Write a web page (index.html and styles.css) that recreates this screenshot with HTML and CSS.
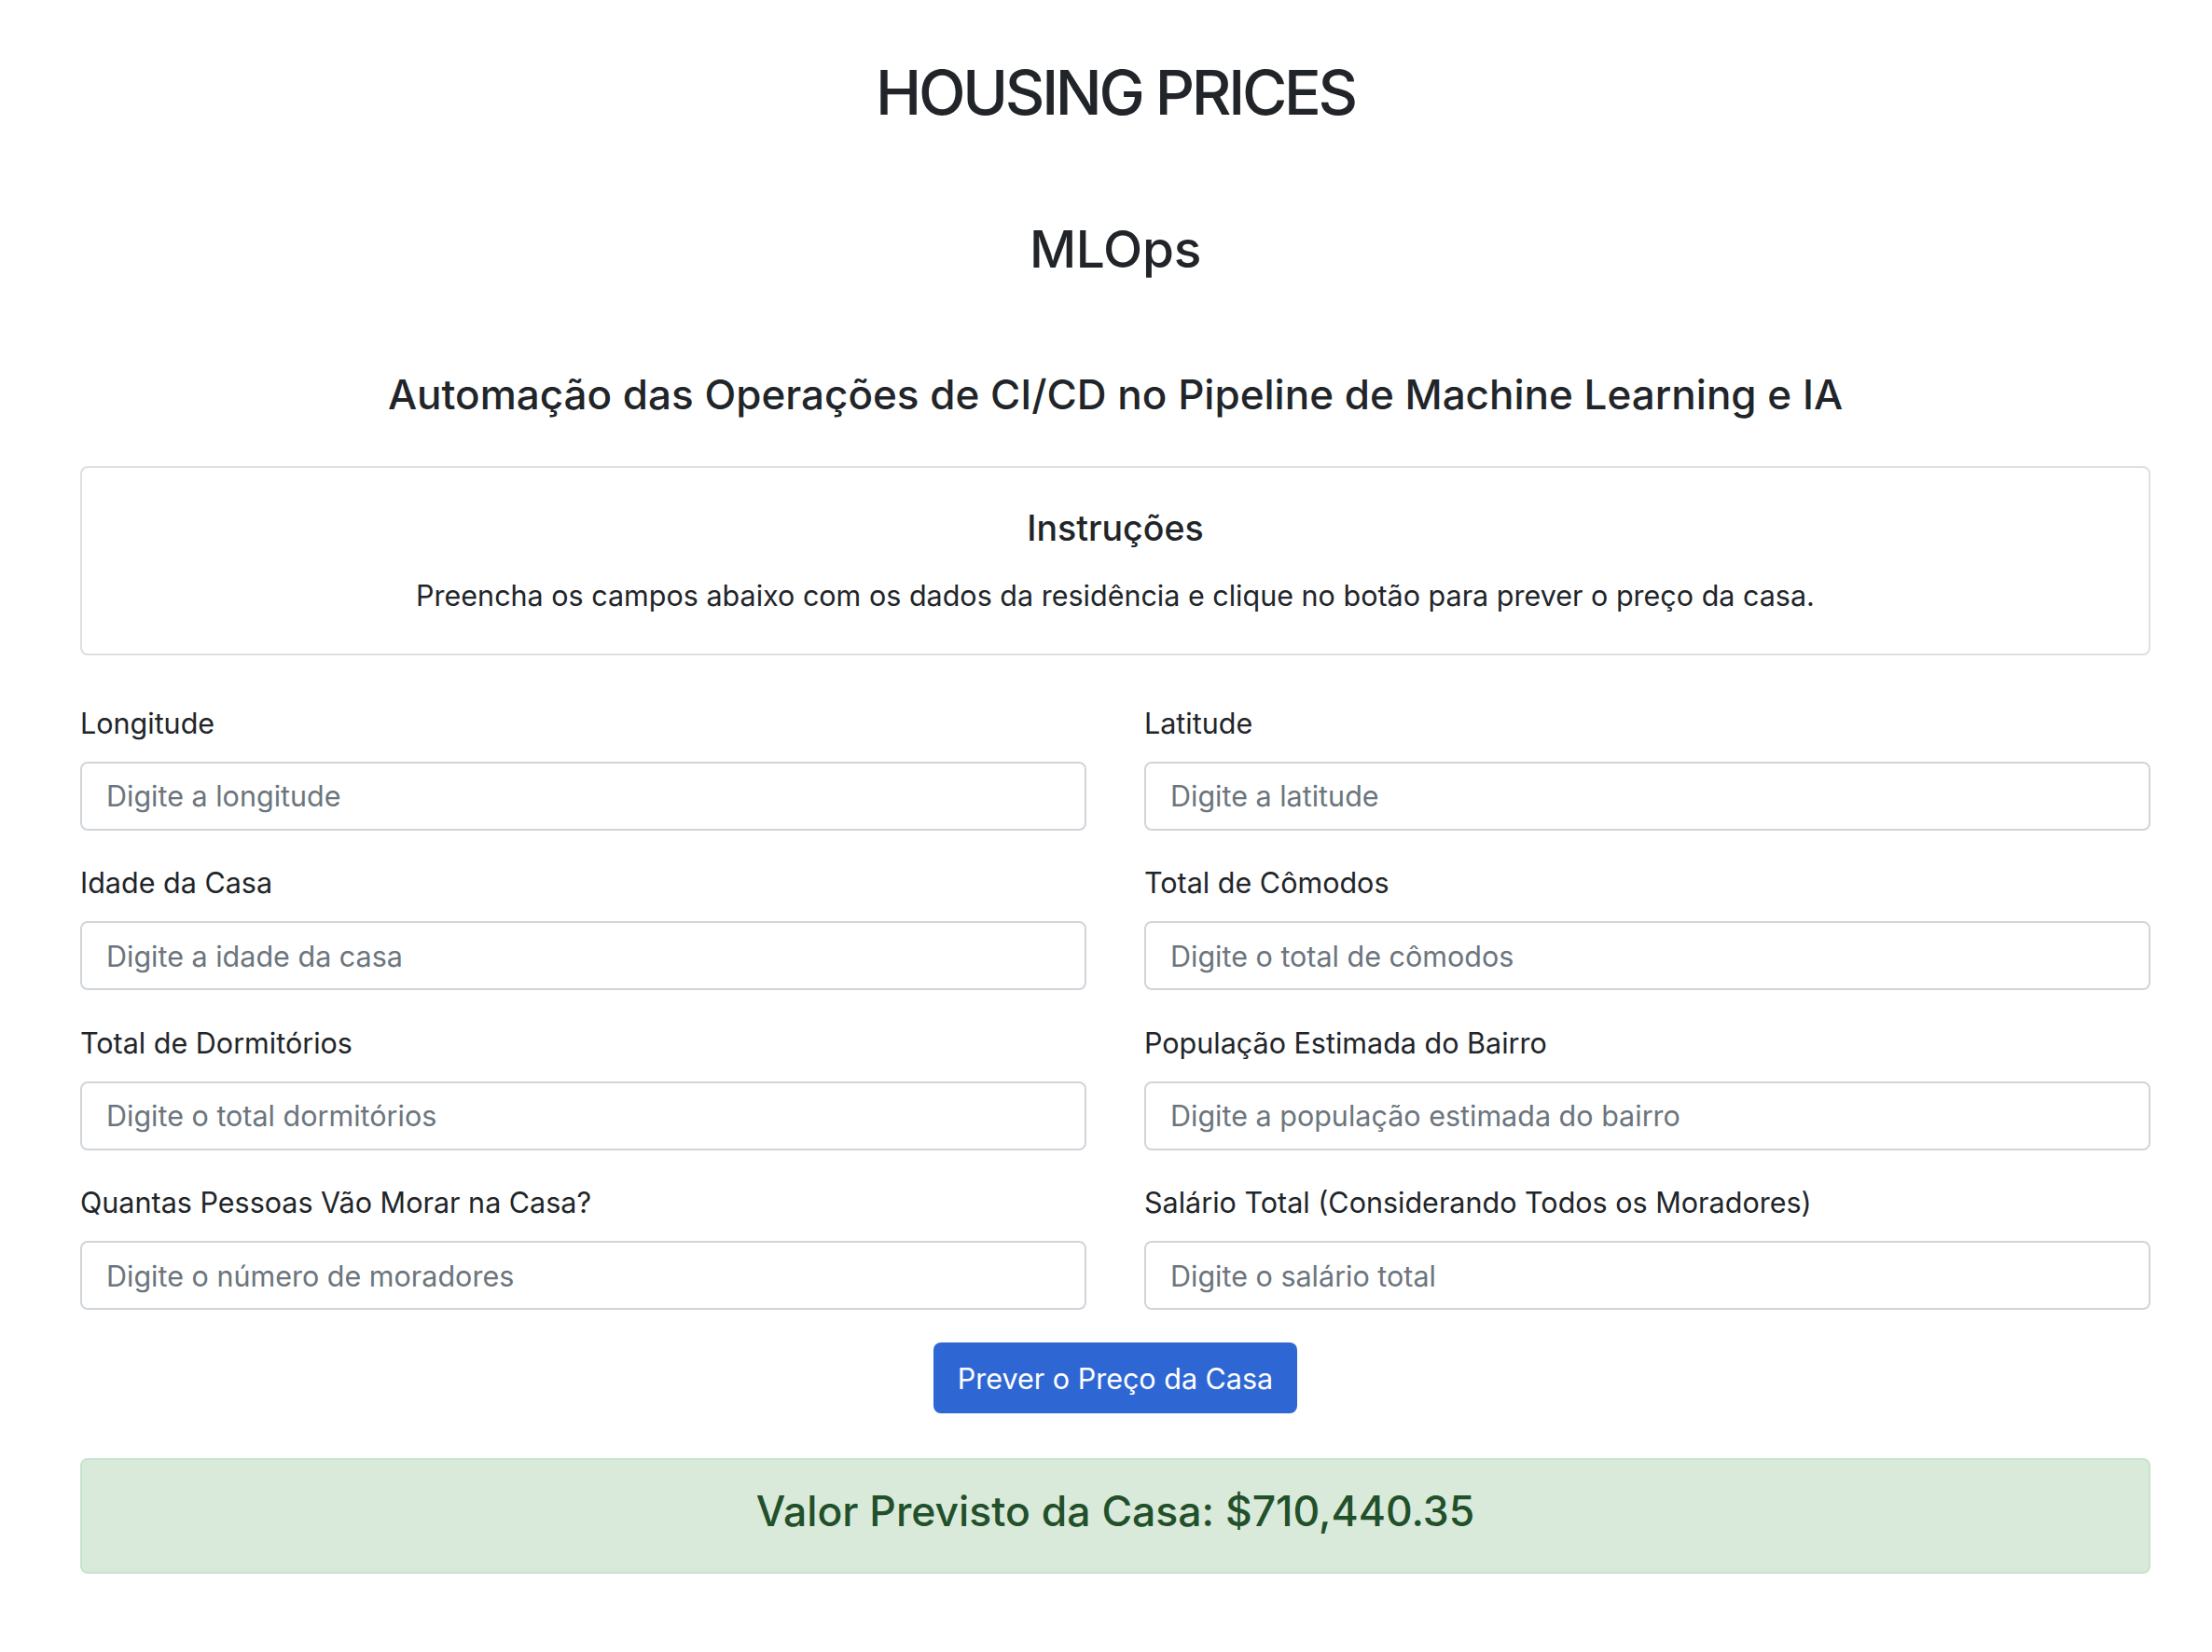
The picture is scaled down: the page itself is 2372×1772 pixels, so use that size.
FILE: index.html
```html
<!DOCTYPE html>
<html lang="pt-BR">
<head>
<meta charset="utf-8">
<title>Housing Prices</title>
<link rel="stylesheet" href="styles.css">
</head>
<body>
<main class="container">
  <h1 class="title">HOUSING PRICES</h1>
  <h2 class="subtitle">MLOps</h2>
  <h3 class="tagline">Automação das Operações de CI/CD no Pipeline de Machine Learning e IA</h3>

  <section class="card">
    <h4 class="card-title">Instruções</h4>
    <p class="card-text">Preencha os campos abaixo com os dados da residência e clique no botão para prever o preço da casa.</p>
  </section>

  <form class="form">
    <div class="grid">
      <div class="field">
        <label class="label">Longitude</label>
        <input class="input" type="text" placeholder="Digite a longitude">
      </div>
      <div class="field">
        <label class="label">Latitude</label>
        <input class="input" type="text" placeholder="Digite a latitude">
      </div>
      <div class="field">
        <label class="label">Idade da Casa</label>
        <input class="input" type="text" placeholder="Digite a idade da casa">
      </div>
      <div class="field">
        <label class="label">Total de Cômodos</label>
        <input class="input" type="text" placeholder="Digite o total de cômodos">
      </div>
      <div class="field">
        <label class="label">Total de Dormitórios</label>
        <input class="input" type="text" placeholder="Digite o total dormitórios">
      </div>
      <div class="field">
        <label class="label">População Estimada do Bairro</label>
        <input class="input" type="text" placeholder="Digite a população estimada do bairro">
      </div>
      <div class="field">
        <label class="label">Quantas Pessoas Vão Morar na Casa?</label>
        <input class="input" type="text" placeholder="Digite o número de moradores">
      </div>
      <div class="field">
        <label class="label">Salário Total (Considerando Todos os Moradores)</label>
        <input class="input" type="text" placeholder="Digite o salário total">
      </div>
    </div>
    <div class="actions">
      <button class="btn" type="button">Prever o Preço da Casa</button>
    </div>
  </form>

  <div class="alert">
    <h3 class="alert-text">Valor Previsto da Casa: $710,440.35</h3>
  </div>
</main>
</body>
</html>
```

FILE: styles.css
```css
* { box-sizing: border-box; }

html, body {
  margin: 0;
  padding: 0;
  background: #ffffff;
}

body {
  font-family: Inter, "Noto Sans", "Liberation Sans", sans-serif;
  color: #212529;
  font-size: 30.5px;
  line-height: 1.5;
}

.container {
  width: 2220px;
  margin-left: 86px;
  text-align: center;
}

.title {
  margin: 60px 0 0;
  font-size: 66px;
  font-weight: 500;
  line-height: 1.2;
  letter-spacing: -0.05em;
}

.subtitle {
  margin: 95px 0 0;
  font-size: 55px;
  font-weight: 500;
  line-height: 1.2;
  letter-spacing: -0.005em;
}

.tagline {
  margin: 97px 0 0;
  font-size: 44px;
  font-weight: 500;
  line-height: 1.2;
}

.card {
  margin-top: 50px;
  border: 2px solid #dfdfdf;
  border-radius: 8px;
  height: 203px;
  padding: 42px 30px 0;
}

.card-title {
  margin: 0;
  font-size: 37.5px;
  font-weight: 500;
  line-height: 1.2;
}

.card-text {
  margin: 27px 0 0;
  font-size: 30.5px;
  line-height: 46px;
}

.form {
  text-align: left;
  margin-top: 50px;
}

.grid {
  display: grid;
  grid-template-columns: 1fr 1fr;
  column-gap: 62px;
  row-gap: 33.4px;
}

.field {
  display: flex;
  flex-direction: column;
}

.label {
  font-size: 30.5px;
  line-height: 46px;
  margin-bottom: 18px;
}

.input {
  height: 74px;
  border: 2px solid #d0d5da;
  border-radius: 8px;
  padding: 0 26px;
  font-family: inherit;
  font-size: 30.5px;
  color: #212529;
  background: #fff;
}

.input::placeholder {
  color: #6c757d;
}

.actions {
  display: flex;
  justify-content: center;
  margin-top: 35px;
}

.btn {
  width: 390px;
  height: 76px;
  border: none;
  border-radius: 8px;
  background: #2e67d3;
  color: #fff;
  font-family: inherit;
  font-size: 30.5px;
}

.alert {
  margin-top: 48px;
  height: 124px;
  padding-bottom: 9px;
  background: #d9eadb;
  border: 2px solid #c8e3cc;
  border-radius: 8px;
  display: flex;
  align-items: center;
  justify-content: center;
}

.alert-text {
  margin: 0;
  font-size: 44.5px;
  font-weight: 500;
  line-height: 1.2;
  color: #22502a;
}
```
